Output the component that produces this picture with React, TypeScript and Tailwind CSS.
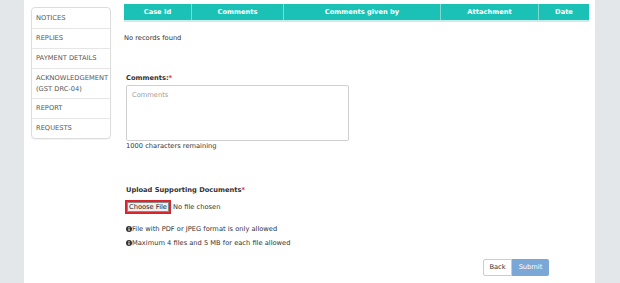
import React from 'react';

const menu = [
  { label: 'NOTICES' },
  { label: 'REPLIES' },
  { label: 'PAYMENT DETAILS' },
  { label: 'ACKNOWLEDGEMENT (GST DRC-04)', tall: true },
  { label: 'REPORT' },
  { label: 'REQUESTS' },
];

const columns = [
  { label: 'Case Id', w: 'w-[68px]' },
  { label: 'Comments', w: 'w-[92px]' },
  { label: 'Comments given by', w: 'w-[157px]' },
  { label: 'Attachment', w: 'w-[98px]' },
  { label: 'Date', w: 'flex-1' },
];

function InfoIcon() {
  return (
    <svg width="6" height="6" viewBox="0 0 12 12" className="shrink-0">
      <circle cx="6" cy="6" r="6" fill="#333" />
      <rect x="5" y="5" width="2" height="5" fill="#fff" />
      <circle cx="6" cy="3.2" r="1.1" fill="#fff" />
    </svg>
  );
}

export default function App() {
  return (
    <div
      className="w-[620px] h-[283px] bg-[#e4e7ea] overflow-hidden text-[6.7px] text-[#333]"
      style={{ fontFamily: '"DejaVu Sans", Verdana, sans-serif' }}
    >
      <div className="ml-[24px] w-[571px] h-full bg-white flex">
        {/* sidebar */}
        <div className="ml-[7px] mt-[7px] w-[80px] self-start border border-[#dcdcdc] rounded-sm shadow-[0_1px_1px_rgba(0,0,0,0.05)]">
          {menu.map((m, i) => (
            <div
              key={m.label}
              className={`px-[4px] flex items-center text-[#555] leading-[10.5px] ${
                m.tall ? 'h-[30px]' : 'h-[20px]'
              } ${i > 0 ? 'border-t border-[#e6e6e6]' : ''}`}
            >
              {m.label}
            </div>
          ))}
        </div>

        {/* content */}
        <div className="ml-[13px] w-[465px] pt-[4px]">
          <div className="flex h-[18px] bg-[#1cc1b5] border-b-2 border-[#c9ecea] text-white font-bold">
            {columns.map((c, i) => (
              <div
                key={c.label}
                className={`${c.w} flex items-center justify-center ${
                  i < columns.length - 1 ? 'border-r border-[#7fd9d1]' : ''
                }`}
              >
                {c.label}
              </div>
            ))}
          </div>

          <div className="mt-[11px] leading-[10px]">No records found</div>

          <div className="ml-[2px] mt-[30px]">
            <div className="font-bold leading-[10px]">
              Comments:<span className="text-[#e3261e]">*</span>
            </div>
            <div className="mt-[2px] w-[223px] h-[56px] border border-[#cfcfcf] rounded-[2px] px-[5px] py-[4px] text-[#9a9a9a]">
              Comments
            </div>
            <div className="leading-[10px]">1000 characters remaining</div>

            <div className="mt-[34px] font-bold leading-[10px]">
              Upload Supporting Documents<span className="text-[#e3261e]">*</span>
            </div>
            <div className="mt-[5px] flex items-center gap-[2px] -ml-[1px]">
              <div className="border-2 border-[#d9262c] h-[14px] w-[46px] flex">
                <div className="flex-1 bg-[#efefef] border border-[#8a8a8a] flex items-center justify-center text-[#222]">
                  Choose File
                </div>
              </div>
              <span>No file chosen</span>
            </div>
            <div className="mt-[10px] flex items-center leading-[10px]">
              <InfoIcon />
              <span>File with PDF or JPEG format is only allowed</span>
            </div>
            <div className="mt-[4px] flex items-center leading-[10px]">
              <InfoIcon />
              <span>Maximum 4 files and 5 MB for each file allowed</span>
            </div>

            <div className="mt-[11px] flex justify-end pr-[40px]">
              <div className="h-[17px] w-[29px] border border-[#cccccc] rounded-l-[2px] flex items-center justify-center text-[#333]">
                Back
              </div>
              <div className="h-[17px] w-[37px] bg-[#7ba7d6] rounded-r-[2px] flex items-center justify-center text-white">
                Submit
              </div>
            </div>
          </div>
        </div>
      </div>
    </div>
  );
}
